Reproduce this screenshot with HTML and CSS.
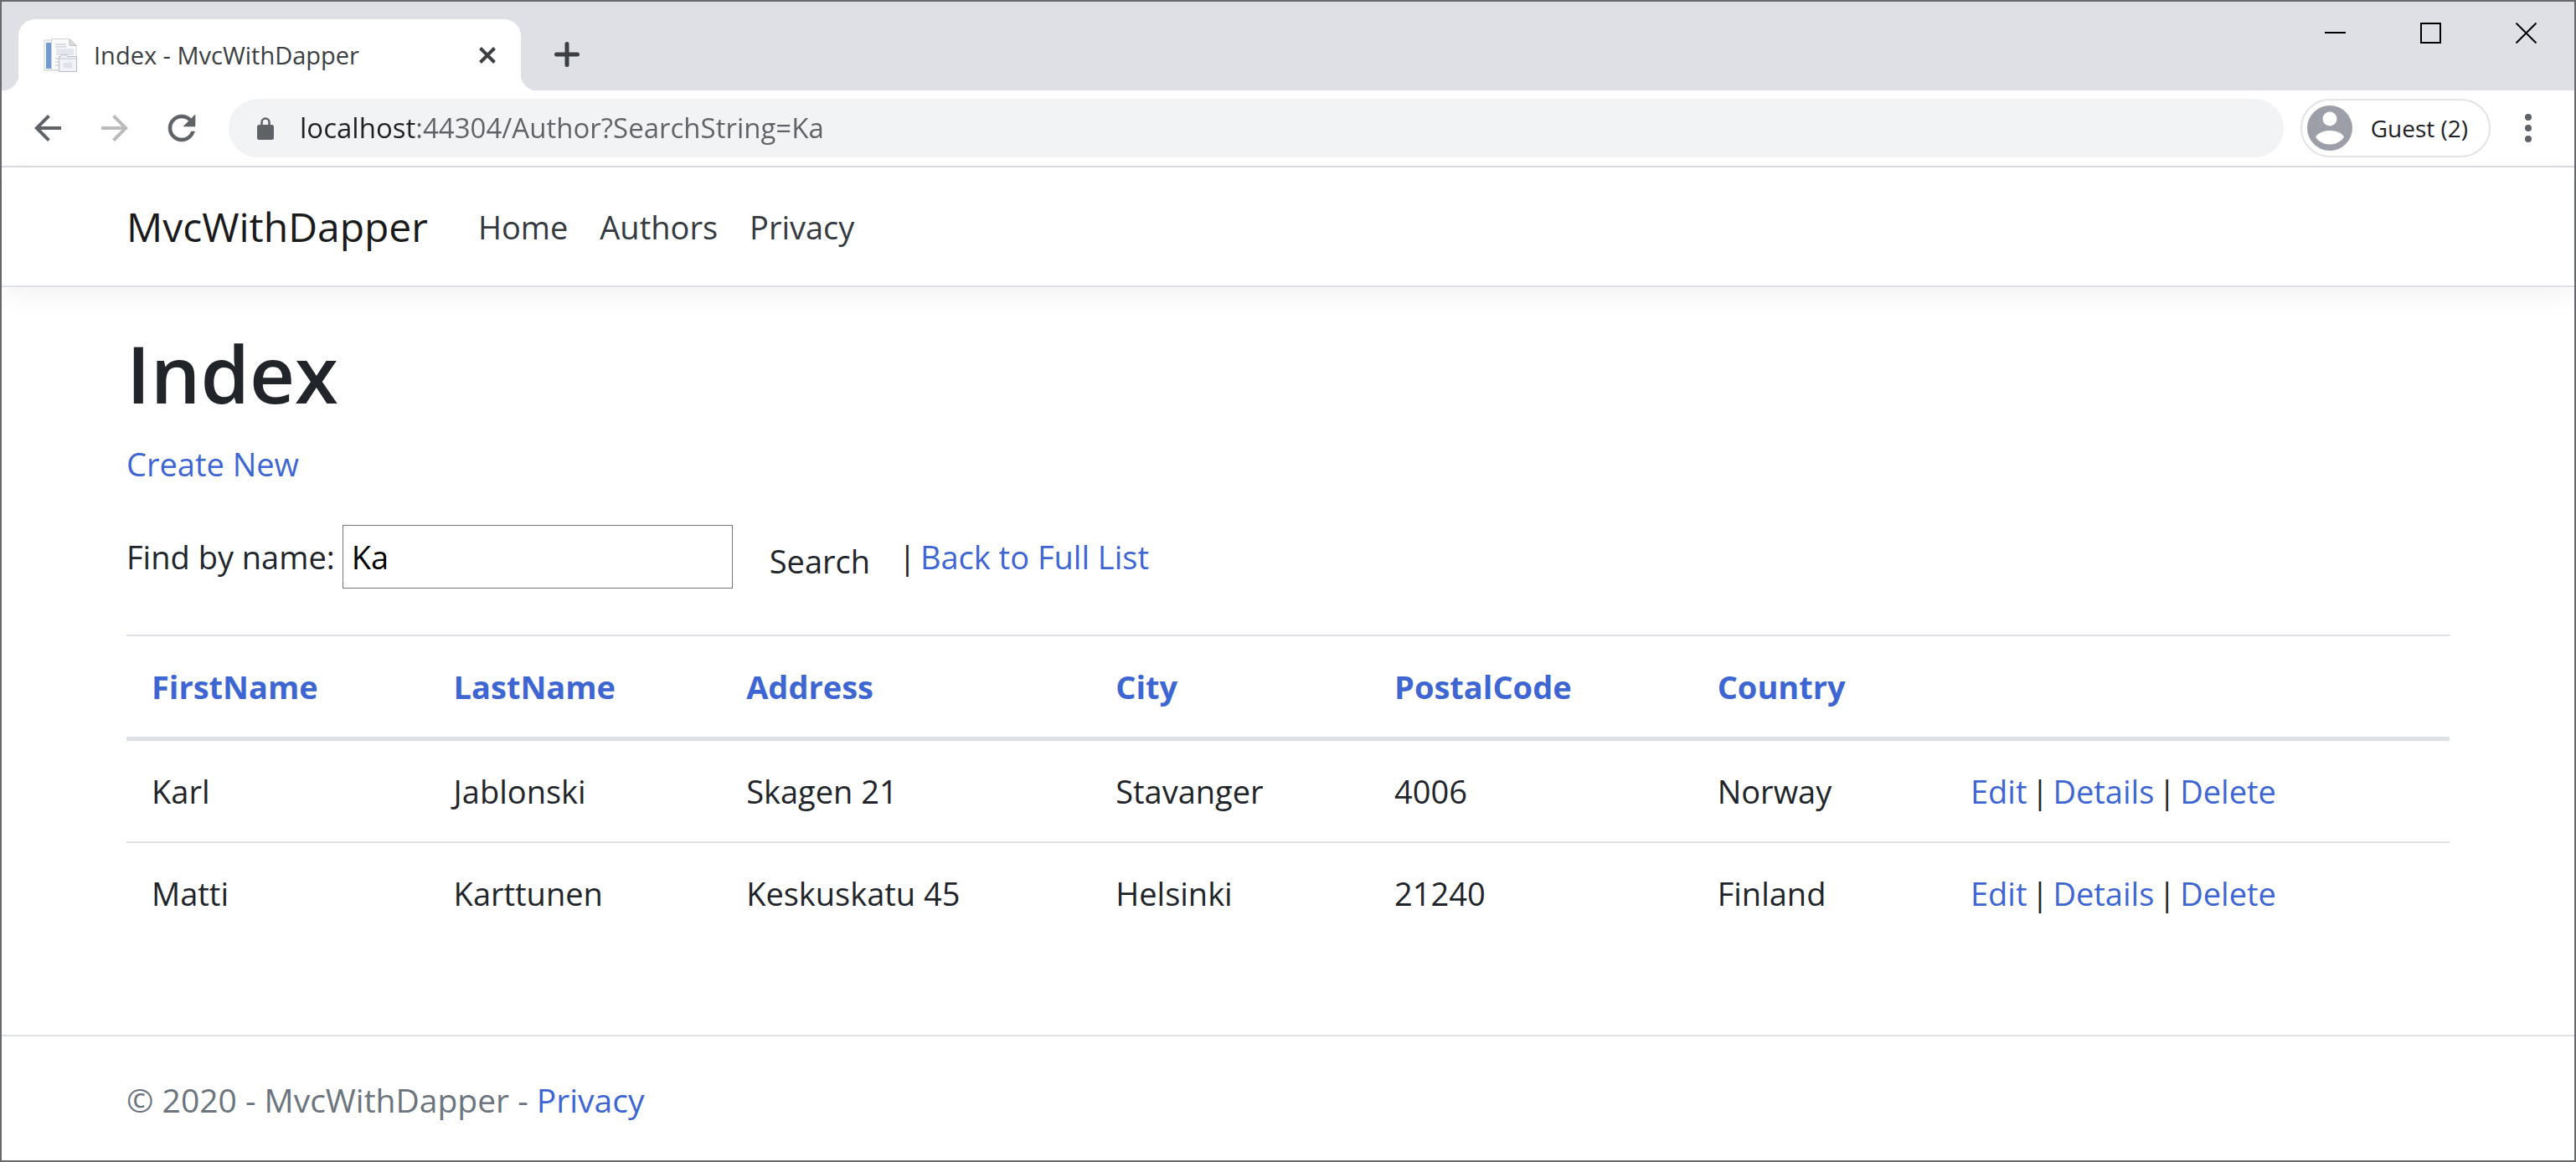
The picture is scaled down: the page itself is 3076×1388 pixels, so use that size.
FILE: index.html
```html
<!DOCTYPE html>
<html lang="en">
<head>
<meta charset="utf-8">
<title>Index - MvcWithDapper</title>
<link rel="stylesheet" href="styles.css">
</head>
<body>
<div class="window">
  <div class="tabstrip">
    <div class="tab">
      <svg class="favicon" viewBox="0 0 40 40" aria-hidden="true">
        <rect x="1" y="2" width="22" height="36" fill="#f4f6f9" stroke="#c9cdd3"/>
        <rect x="3" y="5" width="7" height="31" fill="#6f9bd1"/>
        <path d="M9.500 .5H31l8 8V37.500H9.500z" fill="#fafafb" stroke="#cfd2d6"/>
        <path d="M31 .5v8h8z" fill="#d9dbde" stroke="#bfc2c6"/>
        <path d="M14 7h13M14 10h13" stroke="#dadde4" stroke-width="2"/>
        <path d="M15 12h21v8H15z" fill="#e4e6ee"/>
        <path d="M14 24h5M14 28h5M14 32h5" stroke="#dadde4" stroke-width="2"/>
        <path d="M18.500 21.500h2l1-2h6l1 2h11v18h-21z" fill="#f1f2f7" stroke="#b9bcc2"/>
        <path d="M19 24h20" stroke="#c3c6cc"/>
        <rect x="24" y="29" width="10" height="6" fill="#dfe1e9"/>
      </svg>
      <span class="tab-title">Index - MvcWithDapper</span>
      <button class="icon-button" type="button" aria-label="Close tab">
        <svg class="icon-small" viewBox="0 0 20 20"><path d="M1.500 1.500l17 17M18.500 1.500l-17 17" stroke="#3c4043" stroke-width="4" fill="none"/></svg>
      </button>
    </div>
    <button class="icon-button new-tab" type="button" aria-label="New tab">
      <svg class="icon-plus" viewBox="0 0 30 30"><path d="M15 2.500v25M2.500 15h25" stroke="#3c4043" stroke-width="5" stroke-linecap="round"/></svg>
    </button>
    <div class="window-controls">
      <button class="icon-button" type="button" aria-label="Minimize">
        <svg class="icon-window" viewBox="0 0 25 25"><path d="M0 12h25" stroke="#000" stroke-width="2"/></svg>
      </button>
      <button class="icon-button" type="button" aria-label="Maximize">
        <svg class="icon-window" viewBox="0 0 25 25"><path d="M1 1h23v23H1z" stroke="#000" stroke-width="2" fill="none"/></svg>
      </button>
      <button class="icon-button" type="button" aria-label="Close">
        <svg class="icon-window" viewBox="0 0 25 25"><path d="M.5 .5l24 24M24.500 .5l-24 24" stroke="#000" stroke-width="2"/></svg>
      </button>
    </div>
  </div>

  <div class="toolbar">
    <button class="icon-button" type="button" aria-label="Back">
      <svg class="icon-nav" viewBox="0 0 24 24"><path d="M20 11H7.830l5.590-5.590L12 4l-8 8 8 8 1.410-1.410L7.830 13H20z" fill="#5f6368"/></svg>
    </button>
    <button class="icon-button" type="button" aria-label="Forward">
      <svg class="icon-nav" viewBox="0 0 24 24"><path d="M4 11h12.170l-5.590-5.590L12 4l8 8-8 8-1.410-1.410L16.170 13H4z" fill="#babbbd"/></svg>
    </button>
    <button class="icon-button" type="button" aria-label="Reload">
      <svg class="icon-nav" viewBox="0 0 24 24"><path d="M17.650 6.350C16.200 4.900 14.210 4 12 4c-4.420 0-7.990 3.580-7.990 8s3.570 8 7.990 8c3.730 0 6.840-2.550 7.730-6h-2.080c-.82 2.330-3.040 4-5.650 4-3.310 0-6-2.690-6-6s2.690-6 6-6c1.660 0 3.140.69 4.220 1.780L13 11h7V4z" fill="#5f6368" stroke="#5f6368" stroke-width=".3"/></svg>
    </button>
    <div class="omnibox">
      <svg class="icon-lock" viewBox="0 0 20 27" aria-hidden="true"><path d="M5.500 10V6a4.500 4.500 0 0 1 9 0v4" fill="none" stroke="#5f6368" stroke-width="2.500"/><rect y="9" width="20" height="18" rx="2.500" fill="#5f6368"/></svg>
      <input class="address" type="text" aria-label="Address" value="localhost:44304/Author?SearchString=Ka">
    </div>
    <button class="profile" type="button">
      <svg class="avatar" viewBox="0 0 54 54" aria-hidden="true"><circle cx="27" cy="27" r="27" fill="#9c9fa8"/><circle cx="27" cy="16" r="8.500" fill="#fff"/><path d="M10 37.500C16 27.500 38 27.500 44 37.500C37 49.500 17 49.500 10 37.500z" fill="#fff"/></svg>
      Guest (2)
    </button>
    <button class="icon-button" type="button" aria-label="Menu">
      <svg class="icon-menu" viewBox="0 0 8 34"><g fill="#5f6368"><circle cx="4" cy="4" r="4"/><circle cx="4" cy="17" r="4"/><circle cx="4" cy="30" r="4"/></g></svg>
    </button>
  </div>

  <header class="navbar">
    <a class="brand" href="#">MvcWithDapper</a>
    <nav class="nav">
      <a href="#">Home</a>
      <a href="#">Authors</a>
      <a href="#">Privacy</a>
    </nav>
  </header>

  <main class="content">
    <h1>Index</h1>
    <p class="create"><a href="#">Create New</a></p>
    <form class="search" action="#">
      <label for="name">Find by name:</label>
      <input class="search-input" id="name" type="text" value="Ka">
      <button class="search-button" type="submit">Search</button>
      <div class="links"><span>|</span><a href="#">Back to Full List</a></div>
    </form>
    <table class="authors">
      <colgroup>
        <col class="col-first"><col class="col-last"><col class="col-address"><col class="col-city"><col class="col-postal"><col class="col-country"><col>
      </colgroup>
      <thead>
        <tr>
          <th><a href="#">FirstName</a></th>
          <th><a href="#">LastName</a></th>
          <th><a href="#">Address</a></th>
          <th><a href="#">City</a></th>
          <th><a href="#">PostalCode</a></th>
          <th><a href="#">Country</a></th>
          <th></th>
        </tr>
      </thead>
      <tbody>
        <tr>
          <td>Karl</td><td>Jablonski</td><td>Skagen 21</td><td>Stavanger</td><td>4006</td><td>Norway</td>
          <td><div class="links"><a href="#">Edit</a><span>|</span><a href="#">Details</a><span>|</span><a href="#">Delete</a></div></td>
        </tr>
        <tr>
          <td>Matti</td><td>Karttunen</td><td>Keskuskatu 45</td><td>Helsinki</td><td>21240</td><td>Finland</td>
          <td><div class="links"><a href="#">Edit</a><span>|</span><a href="#">Details</a><span>|</span><a href="#">Delete</a></div></td>
        </tr>
      </tbody>
    </table>
  </main>

  <footer class="footer">© 2020 - MvcWithDapper - <a href="#">Privacy</a></footer>
</div>
</body>
</html>
```
FILE: styles.css
```css
* {
  box-sizing: border-box;
}

body {
  margin: 0;
  background: #fff;
  color: #212529;
  font-family: "Open Sans", "Noto Sans", sans-serif;
  font-size: 38px;
  line-height: 60px;
}

a {
  color: #3e66d3;
  text-decoration: none;
}

button,
input {
  font: inherit;
  color: inherit;
}

svg {
  display: block;
  flex: none;
}

.window {
  display: flex;
  flex-direction: column;
  min-height: 100vh;
  border: 2px solid #68696c;
}

.icon-button {
  display: flex;
  padding: 0;
  border: 0;
  background: none;
}

/* Browser tab strip */
.tabstrip {
  display: flex;
  align-items: flex-start;
  height: 106px;
  padding: 21px 45px 0 20px;
  background: #dfe0e6;
}

.tab {
  position: relative;
  display: flex;
  align-items: center;
  width: 600px;
  height: 85px;
  padding: 0 30px;
  border-radius: 20px 20px 0 0;
  background: #fff;
}

.tab::before,
.tab::after {
  content: "";
  position: absolute;
  bottom: 0;
  width: 20px;
  height: 20px;
}

.tab::before {
  right: 100%;
  background: radial-gradient(circle at 0 0, #dfe0e6 20px, #fff 21px);
}

.tab::after {
  left: 100%;
  background: radial-gradient(circle at 100% 0, #dfe0e6 20px, #fff 21px);
}

.favicon {
  width: 40px;
  height: 40px;
}

.tab-title {
  flex: 1;
  margin-left: 20px;
  color: #3c4043;
  font-size: 29px;
}

.icon-small {
  width: 20px;
  height: 20px;
}

.new-tab {
  margin: 27px 0 0 40px;
}

.icon-plus {
  width: 30px;
  height: 30px;
}

.window-controls {
  display: flex;
  gap: 89px;
  margin: 4px 0 0 auto;
}

.icon-window {
  width: 25px;
  height: 25px;
}

/* Browser toolbar */
.toolbar {
  display: flex;
  align-items: center;
  height: 92px;
  padding: 0 51px 0 31px;
  border-bottom: 2px solid #dadce0;
  gap: 32px;
}

.icon-nav {
  width: 48px;
  height: 48px;
}

.omnibox {
  display: flex;
  flex: 1;
  align-items: center;
  height: 70px;
  margin-right: -12px;
  padding: 0 34px;
  border-radius: 35px;
  background: #f1f3f4;
  gap: 31px;
}

.icon-lock {
  width: 20px;
  height: 27px;
}

.address {
  flex: 1;
  min-width: 0;
  padding: 0;
  border: 0;
  /* Host name in dark ink, the rest of the address in grey */
  background: linear-gradient(90deg, #202124 138px, #5f6368 138px);
  background-clip: text;
  color: #5f6368;
  -webkit-text-fill-color: transparent;
  font-size: 33px;
}

.profile {
  display: flex;
  align-items: center;
  height: 70px;
  margin-right: 9px;
  padding: 0 25px 0 6px;
  border: 2px solid #e3e3e3;
  border-radius: 35px;
  background: #fff;
  color: #202124;
  font-size: 28px;
  gap: 22px;
}

.avatar {
  width: 54px;
  height: 54px;
}

.icon-menu {
  width: 8px;
  height: 34px;
}

/* Site header */
.navbar {
  display: flex;
  align-items: center;
  height: 143px;
  padding: 0 149px;
  border-bottom: 2px solid #dee2e6;
  box-shadow: 0 10px 30px rgba(0, 0, 0, 0.05);
  gap: 60px;
}

.brand {
  color: #1a1a1a;
  font-size: 48px;
}

.nav {
  display: flex;
  gap: 38px;
}

.nav a {
  color: #343a40;
}

/* Page content */
.content {
  flex: 1;
  padding: 43px 149px 109px;
}

h1 {
  margin: 0 0 18px;
  font-size: 94px;
  font-weight: 600;
  line-height: 120px;
}

.create {
  margin: 0 0 43px;
}

.search {
  display: flex;
  align-items: center;
  margin-bottom: 55px;
}

.search-input {
  width: 466px;
  height: 76px;
  margin-left: 9px;
  padding: 0 10px;
  border: 1px solid #767676;
  border-radius: 0;
  background: #fff;
  color: #000;
}

.search-button {
  height: 76px;
  padding: 10px 34px 0 44px;
  border: 0;
  background: none;
}

.links {
  display: flex;
  gap: 5px;
}

.authors {
  width: 100%;
  border-spacing: 0;
  table-layout: fixed;
}

.authors th,
.authors td {
  padding: 30px;
  border-top: 2px solid #dee2e6;
  text-align: left;
}

.authors th {
  border-bottom: 5px solid #dee2e6;
}

.authors tbody tr:first-child td {
  border-top: 0;
}

.col-first { width: 13%; }
.col-last { width: 12.6%; }
.col-address { width: 15.9%; }
.col-city { width: 12%; }
.col-postal { width: 13.9%; }
.col-country { width: 10.9%; }

.footer {
  padding: 46px 149px 42px;
  border-top: 2px solid #dee2e6;
  color: #6c757d;
  font-size: 39px;
}
```
